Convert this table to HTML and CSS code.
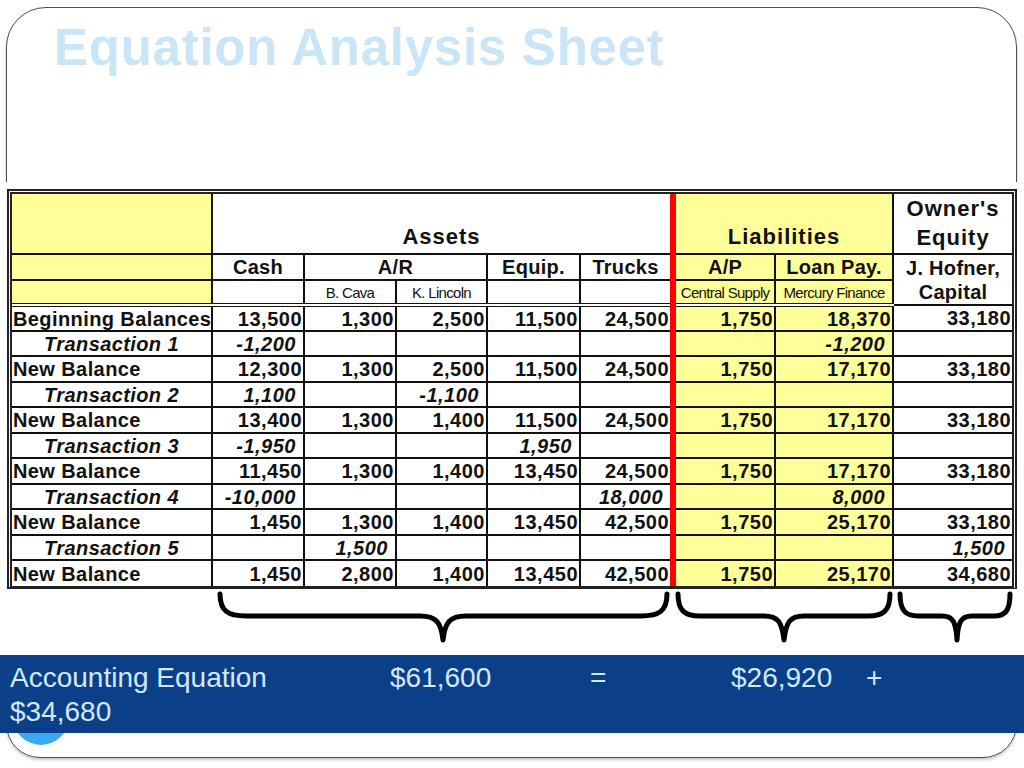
FILE: index.html
```html
<!DOCTYPE html>
<html>
<head>
<meta charset="utf-8">
<title>Equation Analysis Sheet</title>
<link rel="stylesheet" href="styles.css">
</head>
<body>
<div class="slide">
  <h1 class="title">Equation Analysis Sheet</h1>
  <div class="figure">
    <div class="sheet">
      <table class="eq">
        <colgroup>
          <col class="c-label"><col class="c-cash"><col class="c-bc"><col class="c-kl"><col class="c-eqp"><col class="c-tr"><col class="c-ap"><col class="c-lp"><col class="c-oe">
        </colgroup>
        <thead>
          <tr class="h1">
            <th class="y"></th>
            <th colspan="5" class="grp">Assets</th>
            <th colspan="2" class="y grp red">Liabilities</th>
            <th class="grp oe">Owner's<br>Equity</th>
          </tr>
          <tr class="h2">
            <th class="y"></th>
            <th>Cash</th>
            <th colspan="2">A/R</th>
            <th>Equip.</th>
            <th>Trucks</th>
            <th class="y red">A/P</th>
            <th class="y">Loan Pay.</th>
            <th rowspan="2" class="cap">J. Hofner,<br>Capital</th>
          </tr>
          <tr class="h3">
            <th class="y"></th>
            <th></th>
            <th class="sub">B. Cava</th>
            <th class="sub">K. Lincoln</th>
            <th></th>
            <th></th>
            <th class="y red sub">Central Supply</th>
            <th class="y sub">Mercury Finance</th>
          </tr>
        </thead>
        <tbody>
          <tr class="bal r26"><td class="lbl">Beginning Balances</td><td>13,500</td><td>1,300</td><td>2,500</td><td>11,500</td><td>24,500</td><td class="y red">1,750</td><td class="y">18,370</td><td>33,180</td></tr>
          <tr class="tx r25"><td class="lbl">Transaction 1</td><td>-1,200</td><td></td><td></td><td></td><td></td><td class="y red"></td><td class="y">-1,200</td><td></td></tr>
          <tr class="bal r26"><td class="lbl">New Balance</td><td>12,300</td><td>1,300</td><td>2,500</td><td>11,500</td><td>24,500</td><td class="y red">1,750</td><td class="y">17,170</td><td>33,180</td></tr>
          <tr class="tx r25"><td class="lbl">Transaction 2</td><td>1,100</td><td></td><td>-1,100</td><td></td><td></td><td class="y red"></td><td class="y"></td><td></td></tr>
          <tr class="bal r26"><td class="lbl">New Balance</td><td>13,400</td><td>1,300</td><td>1,400</td><td>11,500</td><td>24,500</td><td class="y red">1,750</td><td class="y">17,170</td><td>33,180</td></tr>
          <tr class="tx r25"><td class="lbl">Transaction 3</td><td>-1,950</td><td></td><td></td><td>1,950</td><td></td><td class="y red"></td><td class="y"></td><td></td></tr>
          <tr class="bal r26"><td class="lbl">New Balance</td><td>11,450</td><td>1,300</td><td>1,400</td><td>13,450</td><td>24,500</td><td class="y red">1,750</td><td class="y">17,170</td><td>33,180</td></tr>
          <tr class="tx r25"><td class="lbl">Transaction 4</td><td>-10,000</td><td></td><td></td><td></td><td>18,000</td><td class="y red"></td><td class="y">8,000</td><td></td></tr>
          <tr class="bal r26"><td class="lbl">New Balance</td><td>1,450</td><td>1,300</td><td>1,400</td><td>13,450</td><td>42,500</td><td class="y red">1,750</td><td class="y">25,170</td><td>33,180</td></tr>
          <tr class="tx r25"><td class="lbl">Transaction 5</td><td></td><td>1,500</td><td></td><td></td><td></td><td class="y red"></td><td class="y"></td><td>1,500</td></tr>
          <tr class="bal r26"><td class="lbl">New Balance</td><td>1,450</td><td>2,800</td><td>1,400</td><td>13,450</td><td>42,500</td><td class="y red">1,750</td><td class="y">25,170</td><td>34,680</td></tr>
        </tbody>
      </table>
    </div>
    <svg class="braces" width="1024" height="60" viewBox="0 0 1024 60" aria-hidden="true">
      <path d="M220,5 C220,22 228,27 246,27 L420,27 C436,27 441,33 443,51 C445,33 450,27 466,27 L641,27 C659,27 667,22 667,5"/>
      <path d="M678,5 C678,22 685,27 700,27 L764,27 C778,27 782,33 784,51 C786,33 790,27 804,27 L868,27 C883,27 890,22 890,5"/>
      <path d="M900,5 C900,22 906,27 918,27 L942,27 C953,27 956,33 957,51 C958,33 961,27 972,27 L994,27 C1005,27 1010,22 1010,5"/>
    </svg>
  </div>
  <div class="bar">
    <div class="eqline"><span class="t1">Accounting Equation</span><span class="t2">$61,600</span><span class="t3">=</span><span class="t4">$26,920</span><span>+</span></div>
    <div>$34,680</div>
  </div>
  <div class="dot"></div>
</div>
</body>
</html>
```

FILE: styles.css
```css
* { box-sizing: border-box; }

html, body {
  margin: 0;
  padding: 0;
  background: #ffffff;
}

body {
  width: 1024px;
  height: 768px;
  overflow: hidden;
  font-family: "Liberation Sans", Arial, sans-serif;
}

.slide {
  position: relative;
  margin: 7px 0 0 6px;
  width: 1011px;
  height: 751px;
  border: 1px solid #4d4d4d;
  border-radius: 40px 40px 34px 34px;
  box-shadow: 0 2px 3px rgba(0, 0, 0, 0.22);
}

.title {
  margin: 0;
  height: 174px;
  padding: 14px 0 0 47px;
  font-size: 51px;
  line-height: 51px;
  font-weight: bold;
  letter-spacing: 0.75px;
  color: #cbe5f8;
}

.figure {
  margin: 0 -8px 0 -7px;
  height: 473px;
  background: #ffffff;
  padding-top: 7px;
}

.sheet {
  margin-left: 7px;
  width: 1010px;
  border: 5px double #222;
  border-bottom-width: 3px;
  border-bottom-style: solid;
  background: #fff;
}

.eq {
  width: 1000px;
  table-layout: fixed;
  border-collapse: collapse;
  border-style: hidden;
  color: #111;
  font-weight: bold;
  font-size: 20px;
}

.c-label { width: 200px; }
.c-cash { width: 92px; }
.c-bc { width: 92px; }
.c-kl { width: 91px; }
.c-eqp { width: 93px; }
.c-tr { width: 93px; }
.c-ap { width: 102px; }
.c-lp { width: 118px; }
.c-oe { width: 119px; }

.eq th, .eq td {
  border: 2px solid #111;
  padding: 0;
  white-space: nowrap;
  overflow: hidden;
  line-height: 1;
}

.eq th {
  text-align: center;
  font-weight: bold;
  letter-spacing: 0.3px;
}

.h1 { height: 59px; }
.h2 { height: 26px; }
.h3 { height: 25px; }

.h1 th { vertical-align: bottom; padding-bottom: 5px; font-size: 22px; }
.h1 .grp { letter-spacing: 1px; }
.h1 .oe { line-height: 29px; padding-bottom: 1px; letter-spacing: 1px; }
.h2 th { vertical-align: middle; }
.h3 th { border-bottom: 4px double #111; }

.eq .cap { line-height: 24px; vertical-align: top; padding-top: 1px; }

.eq .sub {
  font-size: 15px;
  font-weight: normal;
  letter-spacing: -0.7px;
  vertical-align: middle;
}

.r26 { height: 26px; }
.r25 { height: 25px; }

.eq td {
  text-align: right;
  padding-right: 1px;
  vertical-align: middle;
  letter-spacing: 0.5px;
}

.eq td.lbl {
  text-align: left;
  padding-left: 1px;
  letter-spacing: 0.4px;
}

.tx td {
  font-style: italic;
  padding-right: 7px;
}

.tx td.lbl {
  text-align: center;
  padding: 0;
}

.eq .y { background: #ffff99; }
.eq .red { border-left: 6px solid #ff0000; }

.braces {
  display: block;
  margin-top: 0;
}

.braces path {
  fill: none;
  stroke: #000;
  stroke-width: 5;
  stroke-linecap: round;
  stroke-linejoin: round;
}

.bar {
  position: relative;
  z-index: 1;
  margin: 0 -8px 0 -7px;
  height: 78px;
  padding: 6px 10px 0;
  background: #0b3f88;
  color: #d3e9ff;
  font-size: 28px;
  line-height: 34px;
}

.eqline span { display: inline-block; }
.t1 { width: 380px; }
.t2 { width: 200px; }
.t3 { width: 141px; }
.t4 { width: 135px; }

.dot {
  position: absolute;
  left: 6px;
  top: 681px;
  width: 56px;
  height: 56px;
  border-radius: 50%;
  background: #3aa9f2;
  z-index: 0;
}
```
